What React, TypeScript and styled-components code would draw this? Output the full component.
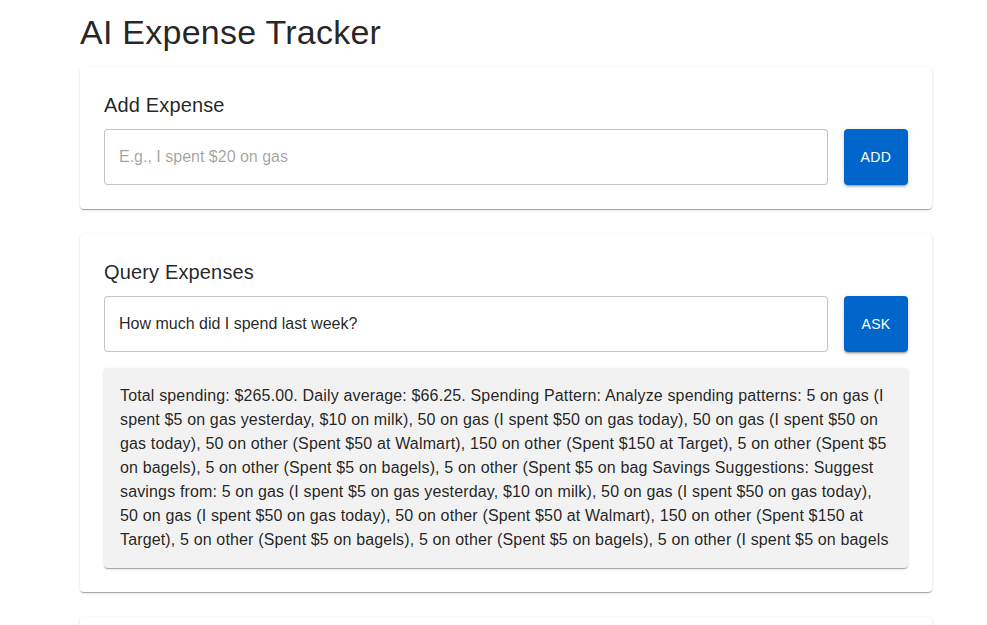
import React, { useState } from "react";
import styled, { createGlobalStyle } from "styled-components";

const Global = createGlobalStyle`
  html, body { margin: 0; padding: 0; background: #fff; }
  body { font-family: "Liberation Sans", Arial, Helvetica, sans-serif; color: rgba(0,0,0,0.87); }
  * { box-sizing: border-box; }
`;

const Container = styled.main`
  width: 852px;
  margin: 0 0 0 80px;
  padding-top: 11px;
`;

const Title = styled.h1`
  margin: 0 0 14px 0;
  font-size: 34px;
  line-height: 42px;
  font-weight: 400;
  letter-spacing: 0.25px;
`;

const Card = styled.section<{ $minHeight?: number }>`
  background: #fff;
  border-radius: 4px;
  padding: 24px;
  margin-bottom: 25px;
  min-height: ${(p) => (p.$minHeight ? `${p.$minHeight}px` : "auto")};
  box-shadow: 0px 2px 1px -1px rgba(0,0,0,0.2), 0px 1px 1px 0px rgba(0,0,0,0.14), 0px 1px 3px 0px rgba(0,0,0,0.12);
`;

const CardTitle = styled.h2`
  margin: 0 0 6px 0;
  font-size: 20px;
  line-height: 32px;
  font-weight: 400;
  letter-spacing: 0.15px;
  position: relative;
  top: -2px;
`;

const Row = styled.div`
  display: flex;
  gap: 16px;
  align-items: stretch;
`;

const Input = styled.input`
  flex: 1;
  height: 56px;
  border: 1px solid rgba(0,0,0,0.23);
  border-radius: 4px;
  padding: 0 14px;
  font-family: inherit;
  font-size: 16px;
  color: rgba(0,0,0,0.87);
  outline: none;
  background: #fff;
  &::placeholder { color: rgba(0,0,0,0.38); }
`;

const Button = styled.button`
  width: 64px;
  height: 56px;
  border: none;
  border-radius: 4px;
  background: #0066cc;
  color: #fff;
  font-family: inherit;
  font-size: 14px;
  letter-spacing: 0.4px;
  text-transform: uppercase;
  cursor: pointer;
  box-shadow: 0px 3px 1px -2px rgba(0,0,0,0.2), 0px 2px 2px 0px rgba(0,0,0,0.14), 0px 1px 5px 0px rgba(0,0,0,0.12);
`;

const Answer = styled.div`
  margin-top: 16px;
  padding: 16px;
  background: #f2f2f2;
  border-radius: 4px;
  font-size: 16px;
  line-height: 24px;
  letter-spacing: 0.15px;
  box-shadow: 0px 2px 1px -1px rgba(0,0,0,0.2), 0px 1px 1px 0px rgba(0,0,0,0.14), 0px 1px 3px 0px rgba(0,0,0,0.12);
`;

const answerText =
  "Total spending: $265.00. Daily average: $66.25. Spending Pattern: Analyze spending patterns: 5 on gas (I spent $5 on gas yesterday, $10 on milk), 50 on gas (I spent $50 on gas today), 50 on gas (I spent $50 on gas today), 50 on other (Spent $50 at Walmart), 150 on other (Spent $150 at Target), 5 on other (Spent $5 on bagels), 5 on other (Spent $5 on bagels), 5 on other (Spent $5 on bag Savings Suggestions: Suggest savings from: 5 on gas (I spent $5 on gas yesterday, $10 on milk), 50 on gas (I spent $50 on gas today), 50 on gas (I spent $50 on gas today), 50 on other (Spent $50 at Walmart), 150 on other (Spent $150 at Target), 5 on other (Spent $5 on bagels), 5 on other (Spent $5 on bagels), 5 on other (I spent $5 on bagels";

export default function App() {
  const [expense, setExpense] = useState("");
  const [query, setQuery] = useState("How much did I spend last week?");
  return (
    <>
      <Global />
      <Container>
        <Title>AI Expense Tracker</Title>
        <Card>
          <CardTitle>Add Expense</CardTitle>
          <Row>
            <Input
              placeholder="E.g., I spent $20 on gas"
              value={expense}
              onChange={(e) => setExpense(e.target.value)}
            />
            <Button>Add</Button>
          </Row>
        </Card>
        <Card>
          <CardTitle>Query Expenses</CardTitle>
          <Row>
            <Input value={query} onChange={(e) => setQuery(e.target.value)} />
            <Button>Ask</Button>
          </Row>
          <Answer>{answerText}</Answer>
        </Card>
        <Card $minHeight={80} />
      </Container>
    </>
  );
}
